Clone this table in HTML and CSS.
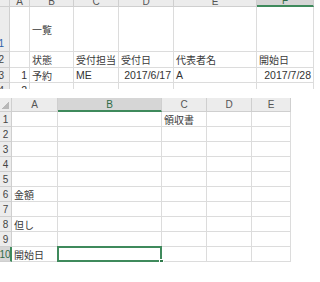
FILE: index.html
```html
<!DOCTYPE html>
<html lang="ja">
<head>
<meta charset="utf-8">
<title>一覧 / 領収書</title>
<link rel="stylesheet" href="styles.css">
</head>
<body>
  <!-- list sheet (scrolled, partially visible) -->
  <div class="sheet list">
    <div class="hd corner"></div>
    <div class="hd col">A</div>
    <div class="hd col">B</div>
    <div class="hd col">C</div>
    <div class="hd col">D</div>
    <div class="hd col">E</div>
    <div class="hd col sel-col">F</div>

    <div class="hd rh rh-bottom active-num">1</div>
    <div class="c"></div>
    <div class="c mid">一覧</div>
    <div class="c"></div>
    <div class="c"></div>
    <div class="c"></div>
    <div class="c"></div>

    <div class="hd rh">2</div>
    <div class="c"></div>
    <div class="c">状態</div>
    <div class="c">受付担当</div>
    <div class="c">受付日</div>
    <div class="c">代表者名</div>
    <div class="c">開始日</div>

    <div class="hd rh">3</div>
    <div class="c num">1</div>
    <div class="c">予約</div>
    <div class="c latin">ME</div>
    <div class="c num">2017/6/17</div>
    <div class="c latin">A</div>
    <div class="c num">2017/7/28</div>

    <div class="hd rh cut">4</div>
    <div class="c num cut">2</div>
    <div class="c cut"></div>
    <div class="c cut"></div>
    <div class="c cut"></div>
    <div class="c cut"></div>
    <div class="c cut"></div>
  </div>

  <!-- receipt sheet -->
  <div class="sheet receipt">
    <div class="hd corner tri"></div>
    <div class="hd col">A</div>
    <div class="hd col sel-col">B</div>
    <div class="hd col">C</div>
    <div class="hd col">D</div>
    <div class="hd col">E</div>

    <div class="hd rh">1</div><div class="c"></div><div class="c"></div><div class="c">領収書</div><div class="c"></div><div class="c"></div>
    <div class="hd rh">2</div><div class="c"></div><div class="c"></div><div class="c"></div><div class="c"></div><div class="c"></div>
    <div class="hd rh">3</div><div class="c"></div><div class="c"></div><div class="c"></div><div class="c"></div><div class="c"></div>
    <div class="hd rh">4</div><div class="c"></div><div class="c"></div><div class="c"></div><div class="c"></div><div class="c"></div>
    <div class="hd rh">5</div><div class="c"></div><div class="c"></div><div class="c"></div><div class="c"></div><div class="c"></div>
    <div class="hd rh">6</div><div class="c">金額</div><div class="c"></div><div class="c"></div><div class="c"></div><div class="c"></div>
    <div class="hd rh">7</div><div class="c"></div><div class="c"></div><div class="c"></div><div class="c"></div><div class="c"></div>
    <div class="hd rh">8</div><div class="c">但し</div><div class="c"></div><div class="c"></div><div class="c"></div><div class="c"></div>
    <div class="hd rh">9</div><div class="c"></div><div class="c"></div><div class="c"></div><div class="c"></div><div class="c"></div>
    <div class="hd rh sel-row">10</div><div class="c">開始日</div><div class="c active"><span class="handle"></span></div><div class="c"></div><div class="c"></div><div class="c"></div>
  </div>
</body>
</html>
```

FILE: styles.css
```css
html, body {
  margin: 0;
  padding: 0;
  background: #ffffff;
}

body {
  width: 320px;
  height: 282px;
  overflow: hidden;
  font-family: "Noto Sans CJK JP", "Liberation Sans", sans-serif;
  font-size: 10px;
  color: #3a3a3a;
}

.sheet {
  display: grid;
  overflow: hidden;
}

.list {
  width: 314px;
  grid-template-columns: 10px 20px 44px 45px 55px 83px 57px;
  grid-template-rows: 7px 45px 16px 15px 6px;
}

.receipt {
  margin-top: 9px;
  width: 291px;
  grid-template-columns: 12px 46px 104px 45px 45px 39px;
  grid-template-rows: 14px repeat(10, 15px);
}

/* plain cells */
.c {
  box-sizing: border-box;
  border-right: 1px solid #dcdcdc;
  border-bottom: 1px solid #dcdcdc;
  padding: 0 2px;
  line-height: 15px;
  white-space: nowrap;
  overflow: hidden;
  display: flex;
  align-items: center;
}

.c.mid { align-items: center; }

.c.num {
  justify-content: flex-end;
  font-family: "Liberation Sans", sans-serif;
  font-size: 10.5px;
  color: #333;
}

.c.latin {
  font-family: "Liberation Sans", sans-serif;
  font-size: 10.5px;
  color: #333;
}

.c.cut,
.hd.cut {
  align-items: flex-start;
  border-bottom: 0;
}

/* headers */
.hd {
  box-sizing: border-box;
  background: #ececec;
  border-right: 1px solid #cfcfcf;
  border-bottom: 1px solid #cfcfcf;
  font-family: "Liberation Sans", sans-serif;
  font-size: 10px;
  color: #555;
  display: flex;
  justify-content: center;
  align-items: center;
  overflow: hidden;
  line-height: 13px;
}

.list .hd.col {
  align-items: flex-end;
  line-height: 9px;
}

.hd.rh {
  justify-content: center;
  line-height: 15px;
  color: #444;
}

.list .hd.rh {
  justify-content: flex-end;
  padding-right: 5px;
}

.hd.rh-bottom { align-items: flex-end; }

.active-num { color: #2f5fa8 !important; }

.hd.sel-col {
  background: #d6d6d6;
  border-bottom: 2px solid #3f8a5c;
  color: #2f6b46;
}

.hd.sel-row {
  background: #d6d6d6;
  border-right: 2px solid #3f8a5c;
  color: #2f6b46;
}

.hd.corner.tri {
  background:
    linear-gradient(135deg, transparent 55%, #b8b8b8 55%) no-repeat right 2px bottom 2px / 8px 8px,
    #ececec;
}

/* selected cell with fill handle */
.c.active {
  position: relative;
  overflow: visible;
  border: 2px solid #3f8a5c;
  margin: -1px 0 0 -1px;
}

.handle {
  position: absolute;
  right: -4px;
  bottom: -4px;
  width: 5px;
  height: 5px;
  background: #2f7a4c;
  border: 1px solid #ffffff;
  box-sizing: border-box;
}
```
